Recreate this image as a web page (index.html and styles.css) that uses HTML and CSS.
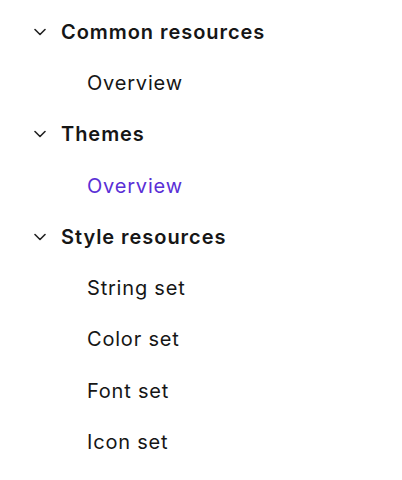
FILE: index.html
```html
<!DOCTYPE html>
<html>
<head>
<meta charset="utf-8">
<link rel="stylesheet" href="styles.css">
</head>
<body>
<nav class="tree">
  <div class="group">
    <div class="row head">
      <svg class="chev" viewBox="0 0 12 8" width="12" height="8"><path d="M1 1.5 L6 6.5 L11 1.5" fill="none" stroke="currentColor" stroke-width="1.6" stroke-linecap="round" stroke-linejoin="round"/></svg>
      <span>Common resources</span>
    </div>
    <div class="row item">Overview</div>
  </div>
  <div class="group">
    <div class="row head">
      <svg class="chev" viewBox="0 0 12 8" width="12" height="8"><path d="M1 1.5 L6 6.5 L11 1.5" fill="none" stroke="currentColor" stroke-width="1.6" stroke-linecap="round" stroke-linejoin="round"/></svg>
      <span>Themes</span>
    </div>
    <div class="row item active">Overview</div>
  </div>
  <div class="group">
    <div class="row head">
      <svg class="chev" viewBox="0 0 12 8" width="12" height="8"><path d="M1 1.5 L6 6.5 L11 1.5" fill="none" stroke="currentColor" stroke-width="1.6" stroke-linecap="round" stroke-linejoin="round"/></svg>
      <span>Style resources</span>
    </div>
    <div class="row item">String set</div>
    <div class="row item">Color set</div>
    <div class="row item">Font set</div>
    <div class="row item">Icon set</div>
  </div>
</nav>
</body>
</html>
```
FILE: styles.css
```css
html, body {
  margin: 0;
  padding: 0;
  background: #ffffff;
}
body {
  font-family: Inter, "Noto Sans", sans-serif;
  color: #161616;
}
.tree {
  display: flex;
  flex-direction: column;
  padding: 6px 0 0 0;
}
.row {
  height: 51.3px;
  display: flex;
  align-items: center;
}
.head {
  padding-left: 34px;
  gap: 15px;
  font-size: 20px;
  font-weight: 600;
  letter-spacing: 0.95px;
}
.chev {
  color: #222;
  flex: none;
}
.item {
  padding-left: 87px;
  font-size: 20px;
  font-weight: 400;
  letter-spacing: 0.8px;
}
.active {
  color: #5a2fd6;
}
```
